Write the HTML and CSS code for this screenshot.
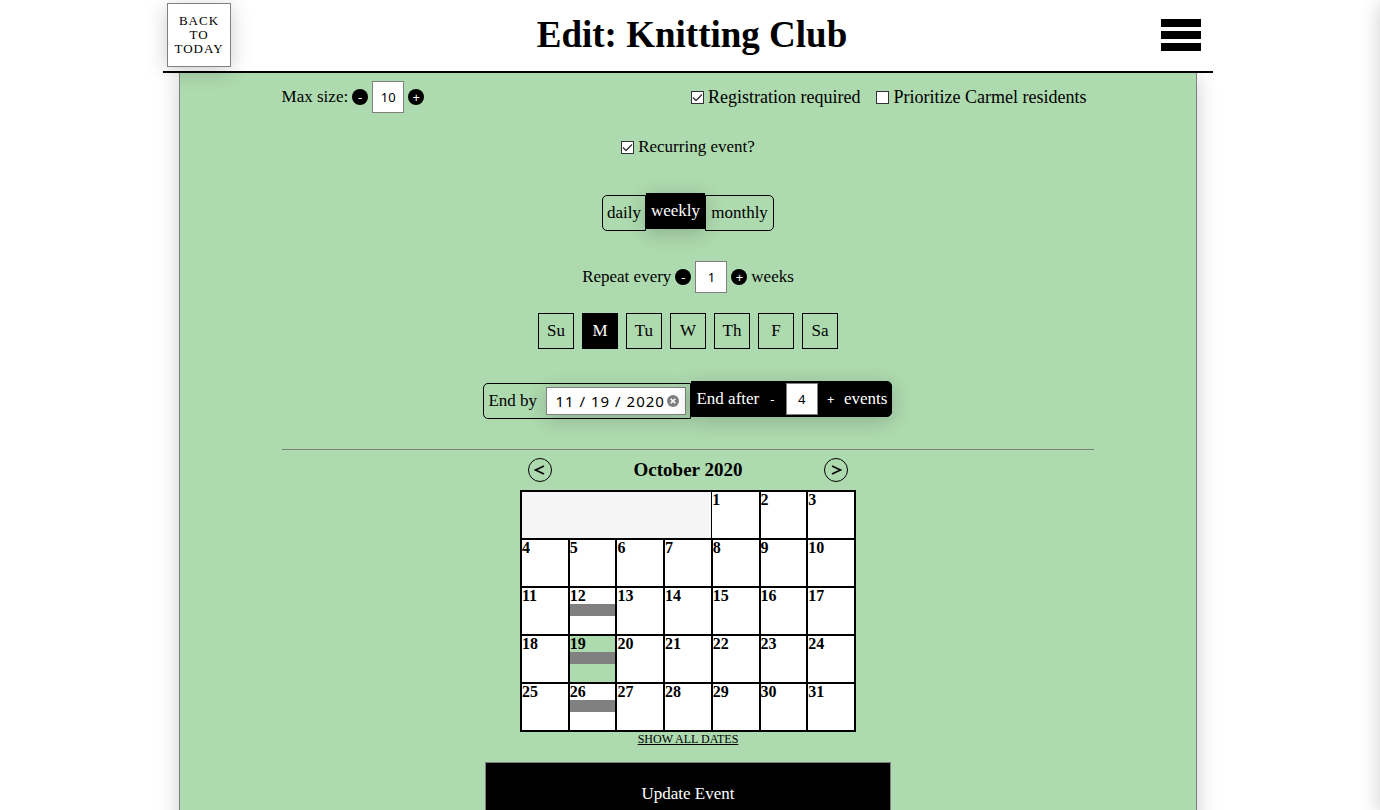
FILE: index.html
```html
<!DOCTYPE html>
<html lang="en">
<head>
<meta charset="utf-8">
<meta name="viewport" content="width=device-width, initial-scale=1">
<title>Edit: Knitting Club</title>
<link rel="stylesheet" href="styles.css">
</head>
<body>
<header class="topbar">
  <button type="button" class="today">BACK TO TODAY</button>
  <h1 class="title">Edit: Knitting Club</h1>
  <button type="button" class="menu" aria-label="Menu"><span class="bar"></span><span class="bar"></span><span class="bar"></span></button>
</header>
<aside class="drawer"></aside>
<main class="page">
  <form class="form">
    <div class="options">
      <div class="stepper">
        <label for="size">Max size:</label>
        <button type="button" class="step" aria-label="Decrease size">-</button>
        <input class="number" id="size" type="text" value="10">
        <button type="button" class="step" aria-label="Increase size">+</button>
      </div>
      <div class="checks">
        <label class="check"><input class="box" type="checkbox" checked>Registration required</label>
        <label class="check"><input class="box" type="checkbox">Prioritize Carmel residents</label>
      </div>
    </div>
    <label class="check recurring"><input class="box" type="checkbox" checked>Recurring event?</label>
    <div class="toggle frequency">
      <button type="button" class="choice first">daily</button>
      <button type="button" class="choice selected">weekly</button>
      <button type="button" class="choice last monthly">monthly</button>
    </div>
    <div class="stepper">
      <label for="every">Repeat every</label>
      <button type="button" class="step" aria-label="Decrease interval">-</button>
      <input class="number" id="every" type="text" value="1">
      <button type="button" class="step" aria-label="Increase interval">+</button>
      <span>weeks</span>
    </div>
    <div class="days">
      <button type="button" class="day">Su</button>
      <button type="button" class="day picked">M</button>
      <button type="button" class="day">Tu</button>
      <button type="button" class="day">W</button>
      <button type="button" class="day">Th</button>
      <button type="button" class="day">F</button>
      <button type="button" class="day">Sa</button>
    </div>
    <div class="toggle ending">
      <div class="choice first until">
        <label for="until">End by</label>
        <span class="datebox">
          <input class="date" id="until" type="text" value="11 / 19 / 2020">
          <button type="button" class="clear" aria-label="Clear date"><svg viewBox="0 0 12 12" width="12" height="12"><circle cx="6" cy="6" r="6" fill="#808080"/><path d="M3.7 3.7l4.6 4.6M8.3 3.7l-4.6 4.6" stroke="#fff" stroke-width="1.6"/></svg></button>
        </span>
      </div>
      <div class="choice last selected stepper after">
        <label for="count">End after</label>
        <button type="button" class="step" aria-label="Fewer events">-</button>
        <input class="number" id="count" type="text" value="4">
        <button type="button" class="step" aria-label="More events">+</button>
        <span>events</span>
      </div>
    </div>
    <hr class="rule">
    <div class="month">
      <button type="button" class="arrow" aria-label="Previous month"><svg viewBox="0 0 24 24" width="24" height="24"><circle cx="12" cy="12" r="11.5"/><path d="M16 8L7.5 12L16 16" stroke-width="1.6"/></svg></button>
      <h2 class="name">October 2020</h2>
      <button type="button" class="arrow" aria-label="Next month"><svg viewBox="0 0 24 24" width="24" height="24"><circle cx="12" cy="12" r="11.5"/><path d="M8 8L16.5 12L8 16" stroke-width="1.6"/></svg></button>
    </div>
    <table class="calendar">
      <tr><td class="blank" colspan="4"></td><td class="start">1</td><td>2</td><td>3</td></tr>
      <tr><td>4</td><td>5</td><td>6</td><td>7</td><td>8</td><td>9</td><td>10</td></tr>
      <tr><td>11</td><td>12<div class="event"></div></td><td>13</td><td>14</td><td>15</td><td>16</td><td>17</td></tr>
      <tr><td>18</td><td class="current">19<div class="event"></div></td><td>20</td><td>21</td><td>22</td><td>23</td><td>24</td></tr>
      <tr><td>25</td><td>26<div class="event"></div></td><td>27</td><td>28</td><td>29</td><td>30</td><td>31</td></tr>
    </table>
    <a class="all" href="#">SHOW ALL DATES</a>
    <button type="submit" class="submit">Update Event</button>
  </form>
</main>
</body>
</html>
```
FILE: styles.css
```css
* { box-sizing: border-box; }
html { scrollbar-width: none; }
body {
  margin: 0;
  padding-right: 4px;
  background: #fff;
  color: #000;
  font: 17px/20px "Liberation Serif", serif;
}
button, input { margin: 0; padding: 0; font: inherit; color: inherit; }
button { background: none; border: 0; cursor: pointer; }
svg { display: block; }

.topbar {
  position: sticky;
  top: 0;
  z-index: 2;
  display: flex;
  align-items: center;
  justify-content: space-between;
  max-width: 1050px;
  margin: 0 auto;
  padding: 3px 4px 4px;
  background: #fff;
  border-bottom: 2px solid #000;
}
.today {
  width: 64px;
  height: 64px;
  background: #fff;
  border: 1px solid #808080;
  box-shadow: 0 4px 20px rgba(0, 0, 0, 0.2);
  font-size: 13px;
  line-height: 14px;
  letter-spacing: 1px;
}
.title { margin: 0; font-size: 37px; line-height: 40px; }
.menu { display: flex; flex-direction: column; gap: 4px; padding: 8px; }
.bar { width: 40px; height: 8px; background: #000; }
.drawer {
  position: fixed;
  top: 0;
  left: 100%;
  width: 300px;
  height: 100vh;
  background: #fff;
  box-shadow: 0 4px 20px rgba(0, 0, 0, 0.2);
}

.page {
  max-width: 1018px;
  min-height: calc(100vh - 73px);
  margin: 0 auto;
  padding: 8px 0 24px;
  background: #aedaaf;
  border: 1px solid #808080;
  border-top: 0;
  box-shadow: 0 4px 20px rgba(0, 0, 0, 0.2);
}
.form { display: flex; flex-direction: column; align-items: center; width: 80%; margin: 0 auto; }
.options { display: flex; justify-content: space-between; width: 100%; }
.stepper { display: flex; align-items: center; gap: 4px; }
.step {
  width: 16px;
  height: 16px;
  border-radius: 50%;
  background: #000;
  color: #fff;
  font: 13px/16px "Noto Sans", sans-serif;
}
.number {
  width: 32px;
  height: 32px;
  background: #fff;
  border: 1px solid #808080;
  color: #000;
  font: 13px/16px "Noto Sans", sans-serif;
  text-align: center;
}
.checks { display: flex; align-items: center; gap: 16px; padding-right: 8px; font-size: 18px; }
.check { display: flex; align-items: center; gap: 4px; }
.box {
  appearance: none;
  width: 13px;
  height: 13px;
  background: #fff;
  border: 1px solid #333;
}
.box:checked {
  background: #fff url("data:image/svg+xml,%3Csvg xmlns='http://www.w3.org/2000/svg' viewBox='0 0 11 11'%3E%3Cpath d='M1 5.500L4 8.500L10 2.500' fill='none' stroke='%23333' stroke-width='1.300'/%3E%3C/svg%3E");
}
.recurring { margin-top: 24px; }

.toggle { display: flex; }
.frequency { margin: 38px 0 30px; }
.ending { margin: 34px 0 30px; }
.choice {
  height: 36px;
  padding: 0 4px;
  border: 1px solid #000;
}
.first { border-radius: 5px 0 0 5px; }
.last { border-radius: 0 5px 5px 0; }
.monthly { min-width: 69px; }
.selected {
  background: #000;
  color: #fff;
  box-shadow: 0 4px 20px rgba(0, 0, 0, 0.2);
  transform: translateY(-2px);
}
.days { display: flex; gap: 8px; margin-top: 20px; }
.day { width: 36px; height: 36px; border: 1px solid #000; }
.picked { background: #000; color: #fff; }

.until { display: flex; align-items: center; justify-content: space-between; min-width: 208px; }
.after { justify-content: space-between; min-width: 201px; }
.datebox {
  display: flex;
  align-items: center;
  width: 140px;
  height: 28px;
  padding: 0 6px 0 8px;
  background: #fff;
  border: 1px solid #808080;
  box-shadow: 0 4px 20px rgba(0, 0, 0, 0.2);
}
.date {
  flex: 1;
  min-width: 0;
  border: 0;
  background: none;
  font: 15px/20px "Noto Sans", sans-serif;
  letter-spacing: 1px;
}
.clear { width: 12px; height: 12px; }

.rule { width: 100%; margin: 0 0 8px; border: 0; border-top: 1px solid #808080; }
.month {
  display: flex;
  align-items: center;
  justify-content: space-between;
  width: 336px;
  padding: 0 8px;
  margin-bottom: 8px;
}
.name { margin: 0; font-size: 19px; line-height: 24px; }
.arrow svg { fill: none; stroke: #000; }
.calendar {
  width: 336px;
  table-layout: fixed;
  border-collapse: collapse;
  font-size: 16px;
  font-weight: bold;
  line-height: 16px;
}
.calendar td {
  height: 48px;
  padding: 0;
  background: #fff;
  border: 2px solid #000;
  vertical-align: top;
}
.calendar .blank { background: #f5f5f5; border-right-width: 1px; }
.calendar .start { border-left-width: 1px; }
.calendar .current { background: #aedaaf; }
.event { height: 12px; background: #808080; }
.all { color: #000; font-size: 12px; line-height: 14px; }
.submit {
  width: 50%;
  height: 64px;
  margin-top: 16px;
  background: #000;
  border: 1px solid #808080;
  color: #fff;
}
```
